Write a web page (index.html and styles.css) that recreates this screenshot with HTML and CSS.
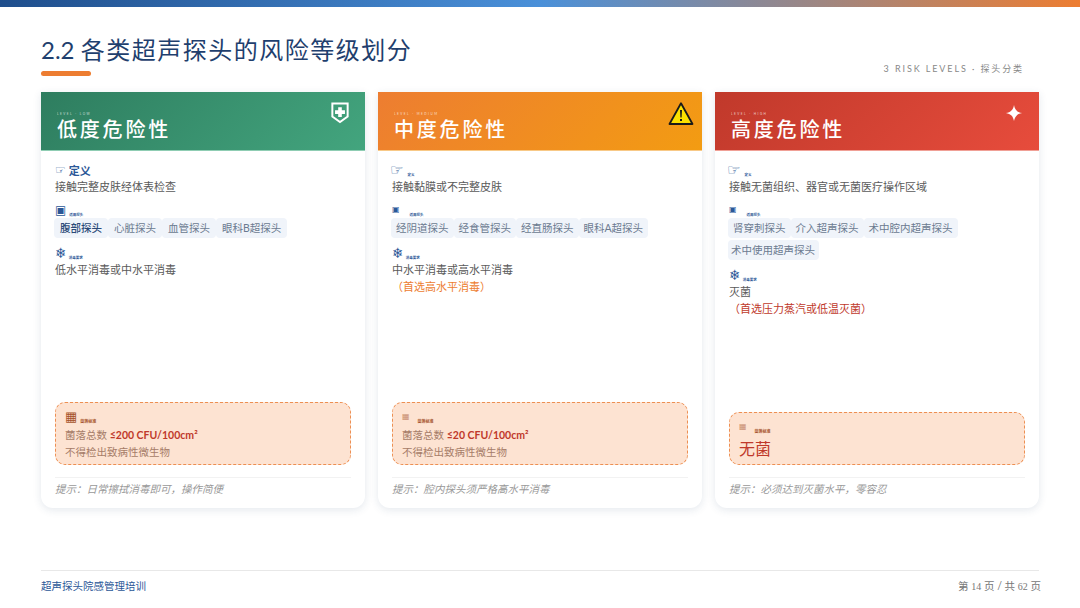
FILE: index.html
```html
<!DOCTYPE html>
<html lang="zh-CN">
<head>
    <meta charset="UTF-8">
    <title>2.2 各类超声探头的风险等级划分</title>
    <link rel="stylesheet" href="styles.css">
</head>
<body>
    <div class="topbar"></div>
    <div class="page">
        <div class="head">
            <div>
                <h1><span class="num">2.2 </span>各类超声探头的风险等级划分</h1>
                <div class="underline"></div>
            </div>
            <div class="sub">3 RISK LEVELS · 探头分类</div>
        </div>

        <div class="cards">
            <div class="card">
                <div class="card-top green">
                    <div class="top-text">
                        <div class="level">LEVEL · LOW</div>
                        <div class="name">低度危险性</div>
                    </div>
                    <svg class="top-icon" viewBox="0 0 20 24" width="18" height="22">
                        <path d="M1.5 1.5h17v14.500l-8.500 6-8.500-6z" fill="none" stroke="#fff" stroke-width="2.200"/>
                        <path d="M8 5.500h4v3.500h3.500v4H12v3.500H8V13H4.500V9H8z" fill="#fff"/>
                    </svg>
                </div>
                <div class="card-body">
                    <div class="sec">
                        <div class="sec-title wide"><span class="ico">☞</span><b class="big">定义</b></div>
                        <p>接触完整皮肤经体表检查</p>
                    </div>
                    <div class="sec">
                        <div class="sec-title"><span class="ico box">▣</span><b>适用探头</b></div>
                        <div class="tags loose">
                            <span class="tag first">腹部探头</span><span class="tag">心脏探头</span><span class="tag">血管探头</span><span class="tag">眼科B超探头</span>
                        </div>
                    </div>
                    <div class="sec">
                        <div class="sec-title"><span class="ico flake">❄</span><b>消毒要求</b></div>
                        <p>低水平消毒或中水平消毒</p>
                    </div>
                    <div class="callout">
                        <div class="call-title"><span class="ico">▦</span><b>菌落标准</b></div>
                        <div class="call-line">菌落总数 <strong>≤200 CFU/100cm²</strong></div>
                        <div class="call-line">不得检出致病性微生物</div>
                    </div>
                    <div class="hint">提示：日常擦拭消毒即可，操作简便</div>
                </div>
            </div>

            <div class="card">
                <div class="card-top orange">
                    <div class="top-text">
                        <div class="level">LEVEL · MEDIUM</div>
                        <div class="name">中度危险性</div>
                    </div>
                    <svg class="top-icon warn" viewBox="0 0 26 24" width="26" height="25">
                        <path d="M13 1.800 24.500 22.500h-23z" fill="#fbe000" stroke="#1a1a1a" stroke-width="1.800" stroke-linejoin="round"/>
                        <path d="M12 8.500h2l-.4 7.500h-1.200zM12 17.500h2v2h-2z" fill="#1a1a1a"/>
                    </svg>
                </div>
                <div class="card-body">
                    <div class="sec">
                        <div class="sec-title"><span class="ico large">☞</span><b>定义</b></div>
                        <p>接触黏膜或不完整皮肤</p>
                    </div>
                    <div class="sec">
                        <div class="sec-title"><span class="ico tiny">▣</span><b>适用探头</b></div>
                        <div class="tags">
                            <span class="tag">经阴道探头</span><span class="tag">经食管探头</span><span class="tag">经直肠探头</span><span class="tag">眼科A超探头</span>
                        </div>
                    </div>
                    <div class="sec">
                        <div class="sec-title"><span class="ico flake">❄</span><b>消毒要求</b></div>
                        <p>中水平消毒或高水平消毒</p>
                        <p class="note orange-text">（首选高水平消毒）</p>
                    </div>
                    <div class="callout">
                        <div class="call-title"><span class="ico small">▦</span><b>菌落标准</b></div>
                        <div class="call-line">菌落总数 <strong>≤20 CFU/100cm²</strong></div>
                        <div class="call-line">不得检出致病性微生物</div>
                    </div>
                    <div class="hint">提示：腔内探头须严格高水平消毒</div>
                </div>
            </div>

            <div class="card">
                <div class="card-top red">
                    <div class="top-text">
                        <div class="level">LEVEL · HIGH</div>
                        <div class="name">高度危险性</div>
                    </div>
                    <svg class="top-icon star" viewBox="0 0 20 20" width="18" height="18">
                        <path d="M10 1c.9 5.400 3.600 8.100 9 9-5.400.9-8.100 3.600-9 9-.9-5.400-3.600-8.100-9-9 5.400-.9 8.100-3.600 9-9z" fill="#fff"/>
                    </svg>
                </div>
                <div class="card-body">
                    <div class="sec">
                        <div class="sec-title"><span class="ico large">☞</span><b>定义</b></div>
                        <p>接触无菌组织、器官或无菌医疗操作区域</p>
                    </div>
                    <div class="sec">
                        <div class="sec-title"><span class="ico tiny">▣</span><b>适用探头</b></div>
                        <div class="tags">
                            <span class="tag">肾穿刺探头</span><span class="tag">介入超声探头</span><span class="tag">术中腔内超声探头</span><span class="tag tight">术中使用超声探头</span>
                        </div>
                    </div>
                    <div class="sec">
                        <div class="sec-title"><span class="ico flake">❄</span><b>消毒要求</b></div>
                        <p>灭菌</p>
                        <p class="note red-text">（首选压力蒸汽或低温灭菌）</p>
                    </div>
                    <div class="callout">
                        <div class="call-title"><span class="ico small">▦</span><b>菌落标准</b></div>
                        <div class="call-big">无菌</div>
                    </div>
                    <div class="hint">提示：必须达到灭菌水平，零容忍</div>
                </div>
            </div>
        </div>

        <div class="footer">
            <span class="foot-left">超声探头院感管理培训</span>
            <span class="foot-right">第 <span class="page-num">14</span> 页 / 共 <span class="page-num">62</span> 页</span>
        </div>
    </div>
</body>
</html>
```

FILE: styles.css
```css
* {
    box-sizing: border-box;
}
html, body {
    margin: 0;
    padding: 0;
}
body {
    width: 1080px;
    height: 608px;
    overflow: hidden;
    background: #fff;
    font-family: "Lato", "Noto Sans CJK SC", sans-serif;
    color: #5a5a5a;
}
p {
    margin: 0;
}
.topbar {
    height: 7px;
    background: linear-gradient(90deg, #1f4e8c 0%, #4a90d9 50%, #ed7d31 100%);
}
.page {
    padding: 0 41px;
}

/* title */
.head {
    display: flex;
    justify-content: space-between;
    align-items: flex-end;
    height: 85px;
    padding: 11px 0 16px;
}
h1 {
    margin: 0;
    height: 33px;
    font-size: 24px;
    line-height: 33px;
    font-weight: 400;
    letter-spacing: 1.500px;
    color: #1f3f6e;
}
.num {
    letter-spacing: 0;
}
.underline {
    width: 50px;
    height: 5px;
    margin-top: 5px;
    background: #ed7d31;
    border-radius: 3px;
}
.sub {
    margin: 0 15px 0 0;
    font-size: 9px;
    line-height: 14px;
    letter-spacing: 1.900px;
    color: #888;
}

/* cards */
.cards {
    display: grid;
    grid-template-columns: repeat(3, 324px);
    gap: 13px;
}
.card {
    display: flex;
    flex-direction: column;
    height: 416px;
    background: #fff;
    border-radius: 0 0 12px 12px;
    box-shadow: 0 2px 8px rgba(31, 63, 110, 0.12);
}
.card-top {
    display: flex;
    justify-content: space-between;
    align-items: flex-start;
    height: 59px;
    padding: 10px 16px 0;
    color: #fff;
}
.green {
    background: linear-gradient(135deg, #2e7d5f, #43a57e);
    border-bottom: 1px solid #8fcdb3;
}
.orange {
    background: linear-gradient(135deg, #ed7d31, #f39c12);
    border-bottom: 1px solid #f8c987;
}
.red {
    background: linear-gradient(135deg, #c0392b, #e74c3c);
    border-bottom: 1px solid #f0a096;
}
.top-text {
    margin-top: 7px;
}
.level {
    height: 10px;
    font-size: 3px;
    line-height: 10px;
    letter-spacing: 1.500px;
    opacity: 0.7;
}
.name {
    font-size: 20px;
    line-height: 20px;
    font-weight: 500;
    letter-spacing: 2.800px;
}
.warn {
    margin: -1px -8px 0 0;
}
.star {
    margin-top: 2px;
}

.card-body {
    flex: 1;
    display: flex;
    flex-direction: column;
    padding: 8px 14px 0;
}
.sec {
    margin-bottom: 4px;
}
.sec p {
    font-size: 11px;
    line-height: 17px;
}
.orange-text {
    color: #ed7d31;
}
.sec .red-text {
    color: #c0392b;
}
.sec .orange-text {
    color: #ed7d31;
}
.sec-title {
    display: flex;
    align-items: flex-end;
    gap: 3px;
    height: 19px;
    color: #2b5797;
}
.sec-title b {
    font-size: 3.500px;
    line-height: 6px;
}
.sec-title .big {
    font-size: 11px;
    line-height: 15px;
    font-weight: 700;
}
.ico {
    font-family: "DejaVu Sans", sans-serif;
    font-size: 12px;
    line-height: 16px;
}
.ico.large {
    font-size: 15px;
    margin: 0 1px 0 -2px;
}
.ico.tiny {
    font-size: 8px;
    margin-right: 7px;
}
.ico.flake {
    font-size: 14px;
    margin-right: -1px;
}
.tags {
    display: flex;
    flex-wrap: wrap;
    gap: 2px 0;
    margin: 0 0 0 -1px;
}
.tag {
    height: 20px;
    padding: 0 5px;
    background: #f0f4fa;
    border-radius: 4px;
    font-size: 10.500px;
    line-height: 20px;
    color: #6b7a90;
}
.loose .tag {
    padding: 0 6px;
}
.tag.first {
    font-weight: 500;
    color: #2b4a78;
}
.tag.tight {
    padding: 0 4px 0 3px;
}

/* colony box */
.callout {
    margin-top: auto;
    padding: 4px 9px 3px;
    background: #fde3d2;
    border: 1px dashed #ed8f52;
    border-radius: 10px;
}
.call-title {
    display: flex;
    align-items: flex-end;
    gap: 3px;
    height: 18px;
    margin-bottom: 2px;
    color: #a5522a;
}
.call-title b {
    font-size: 4px;
    line-height: 6px;
}
.call-title .ico {
    font-size: 13px;
}
.call-title .small {
    font-size: 8px;
    margin-right: 5px;
    opacity: 0.6;
}
.call-line {
    font-size: 10.500px;
    line-height: 17px;
    color: #a67c68;
}
.call-line strong {
    color: #c0392b;
    font-weight: 700;
}
.call-big {
    margin-top: 2px;
    font-size: 16px;
    line-height: 24px;
    color: #c0392b;
}
.hint {
    height: 31px;
    margin-top: 12px;
    border-top: 1px solid #f2f2f2;
    font-size: 10.500px;
    line-height: 23px;
    font-style: italic;
    color: #999;
}

/* footer */
.footer {
    display: flex;
    justify-content: space-between;
    height: 33px;
    margin-top: 62px;
    border-top: 1px solid #e8e8e8;
    font-size: 10.500px;
    line-height: 30px;
}
.foot-left {
    color: #2b5797;
}
.foot-right {
    margin-right: -2px;
    color: #777;
}
.page-num {
    font-family: "Liberation Serif", serif;
    font-size: 10px;
}
```
